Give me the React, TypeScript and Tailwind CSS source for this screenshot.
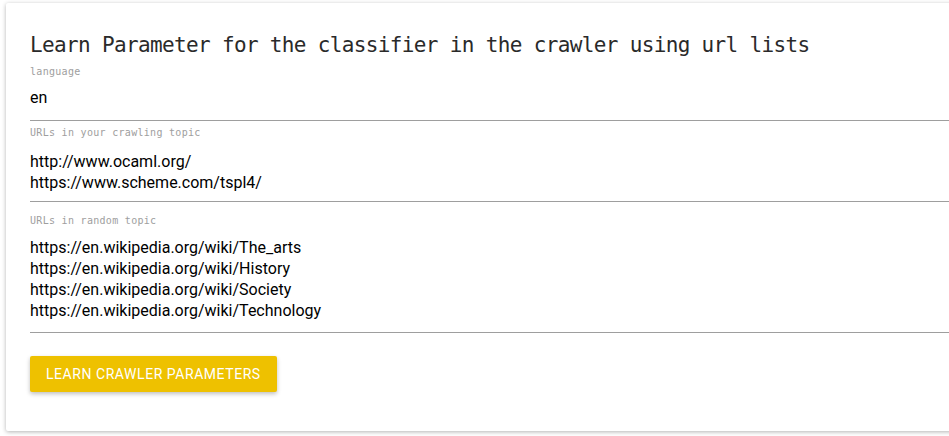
const mono = { fontFamily: '"DejaVu Sans Mono", monospace' };

function Field({ label, lines, labelTop, textTop, bottom }: { label: string; lines: string[]; labelTop: string; textTop: string; bottom: string }) {
  return (
    <div className={`border-b border-[#9e9e9e] ${bottom}`}>
      <div className={`font-['DejaVu_Sans_Mono',monospace] text-[10px] leading-[12px] tracking-[0.3px] text-[#9e9e9e] ${labelTop}`}>{label}</div>
      <div className={`font-['Roboto',sans-serif] text-[16px] leading-[21px] text-black ${textTop}`}>
        {lines.map((l) => (
          <div key={l}>{l}</div>
        ))}
      </div>
    </div>
  );
}

export default function App() {
  return (
    <div className="h-[436px] w-[949px] overflow-hidden bg-white">
      <div className="ml-[6px] mt-[3px] h-[428px] w-[970px] rounded-[2px] bg-white pl-[24px] shadow-[0_1px_4px_rgba(0,0,0,0.3)]">
        <h1 style={mono} className="pt-[28px] text-[21px] leading-[28px] tracking-[-0.65px] text-[#2a2a2a]">
          Learn Parameter for the classifier in the crawler using url lists
        </h1>
        <Field label="language" lines={['en']} labelTop="mt-[7px]" textTop="mt-[9px]" bottom="pb-[12px]" />
        <Field
          label="URLs in your crawling topic"
          lines={['http://www.ocaml.org/', 'https://www.scheme.com/tspl4/']}
          labelTop="mt-[6px]"
          textTop="mt-[12px]"
          bottom="pb-[8px]"
        />
        <Field
          label="URLs in random topic"
          lines={[
            'https://en.wikipedia.org/wiki/The_arts',
            'https://en.wikipedia.org/wiki/History',
            'https://en.wikipedia.org/wiki/Society',
            'https://en.wikipedia.org/wiki/Technology',
          ]}
          labelTop="mt-[13px]"
          textTop="mt-[10px]"
          bottom="pb-[11px]"
        />
        <button className="mt-[23px] h-[36px] rounded-[2px] bg-[#eec100] px-[16px] font-['Roboto',sans-serif] text-[14px] uppercase tracking-[0.55px] text-white shadow-[0_2px_4px_rgba(0,0,0,0.25)]">
          Learn Crawler Parameters
        </button>
      </div>
    </div>
  );
}
